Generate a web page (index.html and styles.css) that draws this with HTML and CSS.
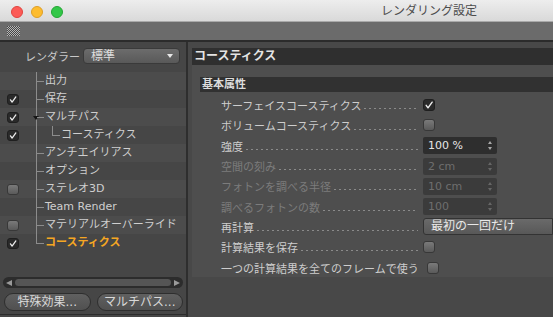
FILE: index.html
```html
<!DOCTYPE html>
<html lang="ja">
<head>
  <meta charset="UTF-8">
  <title>レンダリング設定</title>
  <link rel="stylesheet" href="styles.css">
</head>
<body>
  <div class="window">
    <div class="titlebar">
      <div class="lights">
        <span class="light light--close"></span>
        <span class="light light--min"></span>
        <span class="light light--max"></span>
      </div>
      <div class="title">レンダリング設定</div>
    </div>
    <div class="toolbar"><span class="grip"></span></div>

    <div class="main">
      <aside class="side">
        <div class="renderer">
          <span class="renderer-label">レンダラー</span>
          <div class="select">標準<span class="select-arrow"></span></div>
        </div>

        <ul class="tree">
          <li class="node node--stripe"><span class="check check--none"></span><span class="branch"></span><span class="name">出力</span></li>
          <li class="node"><span class="check check--on"><svg viewBox="0 0 12 12"><path d="M2.6 6.4 L4.8 9.4 L9.8 2.6"/></svg></span><span class="branch"></span><span class="name">保存</span></li>
          <li class="node node--stripe"><span class="check check--on"><svg viewBox="0 0 12 12"><path d="M2.6 6.4 L4.8 9.4 L9.8 2.6"/></svg></span><span class="branch branch--open"></span><span class="name">マルチパス</span></li>
          <li class="node"><span class="check check--on"><svg viewBox="0 0 12 12"><path d="M2.6 6.4 L4.8 9.4 L9.8 2.6"/></svg></span><span class="branch branch--pass"></span><span class="branch branch--sub"></span><span class="name">コースティクス</span></li>
          <li class="node node--stripe"><span class="check check--none"></span><span class="branch"></span><span class="name">アンチエイリアス</span></li>
          <li class="node"><span class="check check--none"></span><span class="branch"></span><span class="name">オプション</span></li>
          <li class="node node--stripe"><span class="check check--off"></span><span class="branch"></span><span class="name">ステレオ3D</span></li>
          <li class="node"><span class="check check--none"></span><span class="branch"></span><span class="name">Team Render</span></li>
          <li class="node node--stripe"><span class="check check--off"></span><span class="branch"></span><span class="name">マテリアルオーバーライド</span></li>
          <li class="node"><span class="check check--on"><svg viewBox="0 0 12 12"><path d="M2.6 6.4 L4.8 9.4 L9.8 2.6"/></svg></span><span class="branch branch--end"></span><span class="name name--active">コースティクス</span></li>
        </ul>

        <div class="hscroll">
          <span class="hscroll-arrow hscroll-arrow--left"></span>
          <span class="hscroll-thumb"></span>
          <span class="hscroll-arrow hscroll-arrow--right"></span>
        </div>

        <div class="side-buttons">
          <button class="pill">特殊効果...</button>
          <button class="pill">マルチパス...</button>
        </div>
      </aside>

      <section class="panel">
        <div class="panel-head">コースティクス</div>
        <div class="panel-box">
          <div class="group">基本属性</div>
          <div class="props">
            <div class="prop">
              <span class="prop-label">サーフェイスコースティクス</span><span class="leader"></span>
              <div class="ctrl"><span class="cb cb--on"><svg viewBox="0 0 12 12"><path d="M2.6 6.4 L4.8 9.4 L9.8 2.6"/></svg></span></div>
            </div>
            <div class="prop">
              <span class="prop-label">ボリュームコースティクス</span><span class="leader"></span>
              <div class="ctrl"><span class="cb"></span></div>
            </div>
            <div class="prop">
              <span class="prop-label">強度</span><span class="leader"></span>
              <div class="ctrl"><span class="field">100 %<span class="spin"></span></span></div>
            </div>
            <div class="prop prop--off">
              <span class="prop-label">空間の刻み</span><span class="leader"></span>
              <div class="ctrl"><span class="field field--off">2 cm<span class="spin"></span></span></div>
            </div>
            <div class="prop prop--off">
              <span class="prop-label">フォトンを調べる半径</span><span class="leader"></span>
              <div class="ctrl"><span class="field field--off">10 cm<span class="spin"></span></span></div>
            </div>
            <div class="prop prop--off">
              <span class="prop-label">調べるフォトンの数</span><span class="leader"></span>
              <div class="ctrl"><span class="field field--off">100<span class="spin"></span></span></div>
            </div>
            <div class="prop">
              <span class="prop-label">再計算</span><span class="leader"></span>
              <div class="ctrl"><span class="dropdown">最初の一回だけ</span></div>
            </div>
            <div class="prop">
              <span class="prop-label">計算結果を保存</span><span class="leader"></span>
              <div class="ctrl"><span class="cb"></span></div>
            </div>
            <div class="prop">
              <span class="prop-label">一つの計算結果を全てのフレームで使う</span><span class="leader"></span>
              <div class="ctrl"><span class="cb"></span></div>
            </div>
          </div>
        </div>
      </section>
    </div>
  </div>
</body>
</html>
```

FILE: styles.css
```css
html, body {
  margin: 0;
  padding: 0;
  background: #464646;
}
body {
  font-family: 'Lucida Grande', 'DejaVu Sans', 'Noto Sans CJK JP', sans-serif;
  font-size: 11px;
  color: #cfcfcf;
}
.window {
  width: 553px;
  height: 317px;
  overflow: hidden;
  display: flex;
  flex-direction: column;
}

/* title bar */
.titlebar {
  height: 21px;
  flex: none;
  display: flex;
  align-items: center;
  background: linear-gradient(#ededed, #d9d9d9);
  border-bottom: 1px solid #a9a9a9;
}
.lights {
  display: flex;
  gap: 8px;
  padding-left: 11px;
  margin-top: 3px;
}
.light {
  width: 12px;
  height: 12px;
  border-radius: 50%;
  box-sizing: border-box;
}
.light--close { background: #fc5b57; border: 1px solid #e1443f; }
.light--min { background: #fdbc2e; border: 1px solid #de9f26; }
.light--max { background: #33c748; border: 1px solid #23a634; }
.title {
  margin-left: 318px;
  font-size: 12px;
  color: #4c4c4c;
  line-height: 21px;
  margin-top: 2px;
}

.toolbar {
  height: 18px;
  flex: none;
  display: flex;
  align-items: center;
  padding-left: 7px;
  background: #6b6b6b;
  border-bottom: 2px solid #2b2b2b;
}
.grip {
  width: 13px;
  height: 10px;
  background: conic-gradient(#d2d2d2 25%, #3a3a3a 0 50%, #d2d2d2 0 75%, #3a3a3a 0) 0 0 / 2px 2px;
  opacity: 0.75;
}

.main {
  flex: 1;
  display: flex;
  min-height: 0;
}

/* left side */
.side {
  width: 186px;
  flex: none;
  display: flex;
  flex-direction: column;
  background: #464646;
  border-right: 2px solid #2e2e2e;
}
.renderer {
  display: flex;
  align-items: center;
  padding: 6px 0 0 25px;
  height: 16px;
}
.renderer-label {
  width: 58px;
  color: #c8c8c8;
}
.select {
  position: relative;
  width: 97px;
  height: 16px;
  box-sizing: border-box;
  border: 1px solid #3a3a3a;
  border-radius: 4px;
  background: linear-gradient(#6c6c6c, #595959);
  color: #dedede;
  padding-left: 7px;
  line-height: 14px;
  font-size: 12px;
}
.select-arrow {
  position: absolute;
  right: 6px;
  top: 5px;
  border-left: 3.5px solid transparent;
  border-right: 3.5px solid transparent;
  border-top: 4px solid #e8e8e8;
}

.tree {
  list-style: none;
  margin: 8px 0 0;
  padding: 0;
  flex: 1;
}
.node {
  display: flex;
  align-items: center;
  height: 18px;
  padding-left: 7px;
}
.node--stripe {
  background: #4c4c4c;
}
.check {
  width: 12px;
  height: 11px;
  flex: none;
  box-sizing: border-box;
  border-radius: 3px;
}
.check--none { visibility: hidden; }
.check--on, .cb--on {
  background: #2a2a2a;
  border: 1px solid #1f1f1f;
}
.check--off {
  background: linear-gradient(#7a7a7a, #5a5a5a);
  border: 1px solid #383838;
}
.check svg, .cb svg {
  display: block;
  width: 100%;
  height: 100%;
}
.check path, .cb path {
  fill: none;
  stroke: #eeeeee;
  stroke-width: 1.7;
  stroke-linecap: round;
  stroke-linejoin: round;
}
.branch {
  position: relative;
  flex: none;
  align-self: stretch;
  width: 8px;
  margin-left: 17px;
  box-sizing: border-box;
  border-left: 1px solid #8c8c8c;
}
.branch::after {
  content: "";
  position: absolute;
  left: 0;
  top: 9px;
  width: 7px;
  height: 1px;
  background: #8c8c8c;
}
.branch--open::before {
  content: "";
  position: absolute;
  left: -4px;
  top: 8px;
  border-left: 3px solid transparent;
  border-right: 3px solid transparent;
  border-top: 4px solid #151515;
}
.branch--pass::after { display: none; }
.branch--sub {
  margin-left: 8px;
  align-self: flex-start;
  height: 10px;
  border-bottom: 1px solid #8c8c8c;
}
.branch--sub::after, .branch--end::after { display: none; }
.branch--end {
  align-self: flex-start;
  height: 10px;
  border-bottom: 1px solid #8c8c8c;
}
.name {
  margin-left: 1px;
  white-space: nowrap;
  line-height: 18px;
}
.name--active {
  color: #f5a623;
  font-weight: bold;
}

.hscroll {
  display: flex;
  align-items: center;
  height: 11px;
  margin: 0 3px;
  border-radius: 6px;
  background: #2c2c2c;
  padding: 0 3px;
}
.hscroll-thumb {
  flex: 1;
  height: 7px;
  margin: 0 3px;
  border-radius: 4px;
  background: #555;
}
.hscroll-arrow {
  width: 0;
  height: 0;
  border-top: 3px solid transparent;
  border-bottom: 3px solid transparent;
}
.hscroll-arrow--left { border-right: 6px solid #9a9a9a; }
.hscroll-arrow--right { border-left: 6px solid #9a9a9a; }

.side-buttons {
  display: flex;
  gap: 6px;
  padding: 5px 3px 3px 4px;
  border-bottom: 1px solid #2c2c2c;
  margin-bottom: 2px;
}
.pill {
  flex: 1;
  height: 18px;
  padding: 0;
  border: 1px solid #2e2e2e;
  border-radius: 9px;
  background: linear-gradient(#606060, #505050);
  color: #d8d8d8;
  font-family: inherit;
  font-size: 12px;
  line-height: 16px;
}

/* right panel */
.panel {
  flex: 1;
  background: #484848;
  padding: 6px 0 0 4px;
  min-width: 0;
}
.panel-head {
  height: 17px;
  background: #2f2f2f;
  color: #e4e4e4;
  font-weight: bold;
  font-size: 12px;
  line-height: 17px;
  padding-left: 2px;
}
.panel-box {
  height: 200px;
  padding-top: 12px;
  background: #4e4e4e;
}
.group {
  margin-left: 8px;
  height: 15px;
  line-height: 15px;
  background: #313131;
  color: #dcdcdc;
  font-weight: bold;
  padding-left: 2px;
}
.props {
  margin-top: 3px;
}
.prop {
  display: flex;
  align-items: center;
  height: 20.3px;
  padding-left: 29px;
}
.prop-label {
  white-space: nowrap;
  color: #cdcdcd;
}
.prop--off .prop-label {
  color: #7c7c7c;
}
.leader {
  flex: 1;
  align-self: flex-end;
  height: 1px;
  margin: 0 0 6px 3px;
  background: linear-gradient(to right, #8a8a8a 2px, transparent 2px) repeat-x;
  background-size: 5px 1px;
}
.ctrl {
  width: 130px;
  flex: none;
  margin-left: 5px;
  display: flex;
  align-items: center;
}
.cb {
  width: 12px;
  height: 12px;
  box-sizing: border-box;
  border-radius: 3px;
  background: linear-gradient(#7a7a7a, #5a5a5a);
  border: 1px solid #383838;
}
.cb.cb--on {
  background: #2a2a2a;
  border: 1px solid #1f1f1f;
}
.field {
  position: relative;
  width: 74px;
  height: 17px;
  box-sizing: border-box;
  border-radius: 2px;
  background: #2e2e2e;
  color: #e6e6e6;
  padding-left: 5px;
  line-height: 17px;
  font-size: 11px;
}
.field--off {
  background: #3b3b3b;
  color: #6e6e6e;
}
.spin {
  position: absolute;
  right: 4px;
  top: 4px;
  width: 5px;
  height: 9px;
}
.spin::before, .spin::after {
  content: "";
  position: absolute;
  left: 0;
  border-left: 2.5px solid transparent;
  border-right: 2.5px solid transparent;
}
.spin::before {
  top: 0;
  border-bottom: 3px solid #a8a8a8;
}
.spin::after {
  bottom: 0;
  border-top: 3px solid #a8a8a8;
}
.field--off .spin::before { border-bottom-color: #666; }
.field--off .spin::after { border-top-color: #666; }
.dropdown {
  width: 140px;
  height: 17px;
  box-sizing: border-box;
  border: 1px solid #333;
  border-radius: 3px 0 0 3px;
  background: linear-gradient(#6a6a6a, #585858);
  color: #e8e8e8;
  padding-left: 7px;
  line-height: 15px;
  font-size: 12px;
}
```
